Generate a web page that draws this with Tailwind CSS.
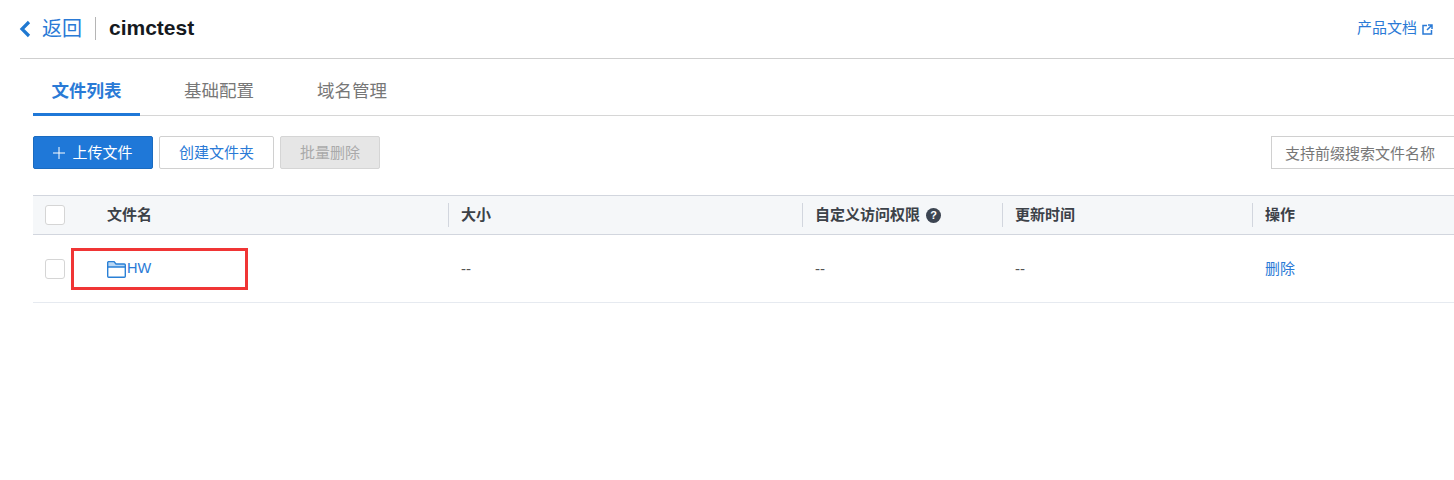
<!doctype html>
<html lang="zh-CN">
<head>
	<title>cimctest</title>
	<meta charset="UTF-8">
	<script src="https://cdn.jsdelivr.net/npm/@tailwindcss/browser@4"></script>
</head>
<body class="relative h-[480px] overflow-hidden bg-white font-['Liberation_Sans','Noto_Sans_CJK_SC',sans-serif] text-[15px] text-[#444]">
	<header class="ml-5 h-[59px] flex items-center border-b border-[#cfcfcf]">
		<svg class="-ml-px w-3 h-[18px] text-[#1f78d1]" viewBox="0 0 12 18" fill="none" stroke="currentColor" stroke-width="3.2"><path d="M10 2 L3 9 L10 16"/></svg>
		<a class="ml-[11px] text-[20px] text-[#2a7ad6]">返回</a>
		<span class="ml-[13px] -mt-[2px] h-[23px] w-px bg-[#b5b5b5]"></span>
		<b class="ml-[13px] -mt-[2px] text-[21px] text-[#15191e]">cimctest</b>
		<a class="ml-auto mr-[21px] -mt-[2px] flex items-center gap-[5px] text-[#2a7ad6]">产品文档
			<svg class="mt-[2px] w-[11px] h-[11px]" viewBox="0 0 11 11" fill="none" stroke="currentColor" stroke-width="1.5"><path d="M5 1.5H1V10H9.5V6M6 1h4v4M10 1 5 6"/></svg>
		</a>
	</header>

	<nav class="ml-[33px] h-[57px] flex items-end border-b border-[#d6d6d6] text-[17.5px] text-[#777]">
		<a class="w-[107px] h-[38px] -mb-px border-b-[3px] border-[#1f78d8] text-center font-bold text-[#2a7ad6]">文件列表</a>
		<a class="ml-[44px] h-[37px]">基础配置</a>
		<a class="ml-[63px] h-[37px]">域名管理</a>
	</nav>

	<div class="ml-[33px] mt-5 flex items-center gap-[6px] h-[33px]">
		<button class="h-[33px] w-[120px] pt-px flex items-center justify-center gap-[7px] rounded-[2px] border border-[#1a6bc0] bg-[#1f78d8] text-white">
			<svg class="w-3 h-3" viewBox="0 0 12 12" stroke="currentColor" stroke-width="1"><path d="M6 0V12M0 6H12"/></svg>
			上传文件
		</button>
		<button class="h-[33px] w-[115px] pt-px rounded-[2px] border border-[#d0d0d0] bg-white text-[#2a7ad6]">创建文件夹</button>
		<button class="h-[33px] w-[100px] pt-px rounded-[2px] border border-[#d5d5d5] bg-[#e6e6e6] text-[#aaa]">批量删除</button>
		<input class="ml-auto -mr-px h-[33px] w-[184px] pt-px border border-[#d0d0d0] px-[13px] placeholder:text-[#777] outline-none" placeholder="支持前缀搜索文件名称">
	</div>

	<div class="ml-[33px] mt-[26px]">
		<div class="h-[40px] grid grid-cols-[415px_354px_200px_250px_1fr] items-center border-y border-[#d2d6de] bg-[#f5f7f9] font-bold text-[#3c4148]">
			<div class="flex items-center pl-3">
				<span class="w-5 h-5 rounded-[3px] border border-[#d5d5d5] bg-white"></span>
				<span class="ml-[42px]">文件名</span>
			</div>
			<div class="h-6 flex items-center pl-3 border-l border-[#d2d6de]">大小</div>
			<div class="h-6 flex items-center gap-[6px] pl-3 border-l border-[#d2d6de]">自定义访问权限
				<span class="w-[15px] h-[15px] rounded-full bg-[#3c4552] text-white text-[11px] flex items-center justify-center">?</span>
			</div>
			<div class="h-6 flex items-center pl-3 border-l border-[#d2d6de]">更新时间</div>
			<div class="h-6 flex items-center pl-3 border-l border-[#d2d6de]">操作</div>
		</div>
		<div class="h-[68px] grid grid-cols-[415px_354px_200px_250px_1fr] items-center border-b border-[#e6eaf0] text-[#555]">
			<div class="flex items-center pl-3">
				<span class="w-5 h-5 rounded-[3px] border border-[#d5d5d5] bg-white"></span>
				<svg class="ml-[42px] mt-px w-[19px] h-[17px]" viewBox="0 0 19 17" fill="none" stroke="#2a80d6" stroke-width="1.4"><path fill="#b9d7f4" d="M.7 6V1.6a1 1 0 0 1 1-1H7l2 2.4h8.3a1 1 0 0 1 1 1V6Z"/><path d="M.7 6V15.3a1 1 0 0 0 1 1H17.3a1 1 0 0 0 1-1V6"/></svg>
				<a class="ml-px mt-px text-[14.5px] text-[#2a7ad6]">HW</a>
			</div>
			<div class="pl-[13px] mt-px">--</div>
			<div class="pl-[13px] mt-px">--</div>
			<div class="pl-[13px] mt-px">--</div>
			<a class="pl-[13px] mt-px text-[#2a7ad6]">删除</a>
		</div>
	</div>

	<div class="absolute left-[71px] top-[248px] w-[177px] h-[42px] border-[3px] border-[#f03535]"></div>
</body>
</html>
